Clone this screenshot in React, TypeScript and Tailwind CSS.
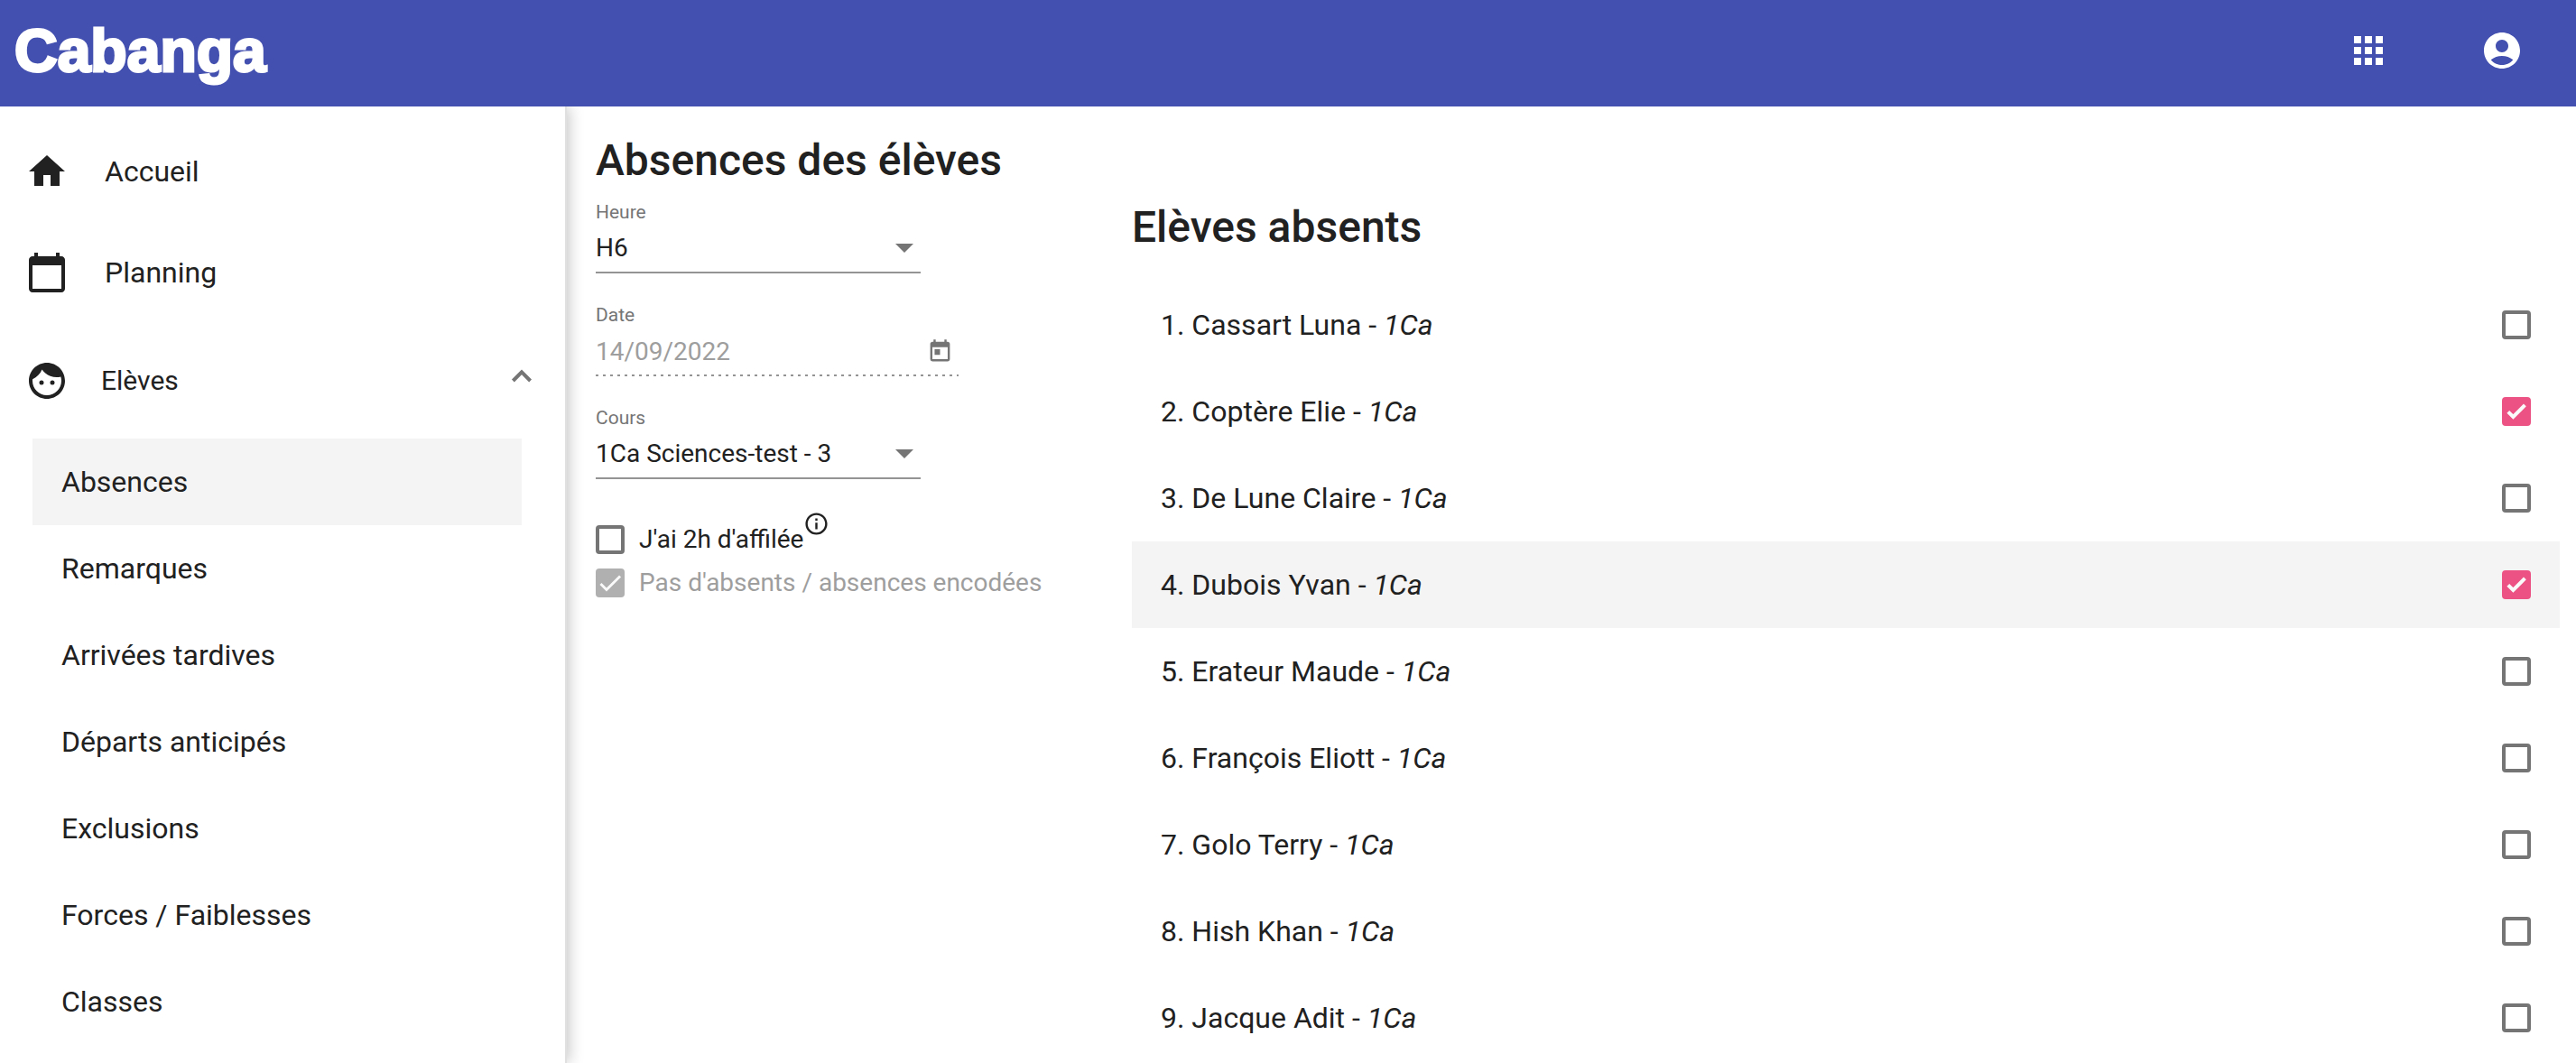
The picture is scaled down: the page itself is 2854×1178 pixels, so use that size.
import { useState } from 'react';
import {
  MdAccountCircle,
  MdApps,
  MdCalendarToday,
  MdFace,
  MdHome,
  MdInfoOutline,
  MdToday,
} from 'react-icons/md';

const studentLinks = [
  'Absences',
  'Remarques',
  'Arrivées tardives',
  'Départs anticipés',
  'Exclusions',
  'Forces / Faiblesses',
  'Classes',
];

const students = [
  { id: 1, name: 'Cassart Luna', group: '1Ca' },
  { id: 2, name: 'Coptère Elie', group: '1Ca' },
  { id: 3, name: 'De Lune Claire', group: '1Ca' },
  { id: 4, name: 'Dubois Yvan', group: '1Ca' },
  { id: 5, name: 'Erateur Maude', group: '1Ca' },
  { id: 6, name: 'François Eliott', group: '1Ca' },
  { id: 7, name: 'Golo Terry', group: '1Ca' },
  { id: 8, name: 'Hish Khan', group: '1Ca' },
  { id: 9, name: 'Jacque Adit', group: '1Ca' },
];

function Header() {
  return (
    <header className="relative z-10 flex h-[118px] items-center justify-between bg-[#4450af] pb-[6px] pl-4 pr-[58px] text-white">
      <a
        href="#"
        className="font-['Liberation_Sans',sans-serif] text-[66px] font-bold leading-[80px] [-webkit-text-stroke:3px_white]"
      >
        Cabanga
      </a>
      <div className="flex items-center gap-[100px]">
        <button type="button" aria-label="Applications">
          <MdApps className="h-12 w-12" />
        </button>
        <button type="button" aria-label="Compte">
          <MdAccountCircle className="h-12 w-12" />
        </button>
      </div>
    </header>
  );
}

function Sidebar() {
  const [open, setOpen] = useState(true);

  return (
    <nav className="w-[628px] shrink-0 border-r-2 border-[#e0e0e0] pt-4 shadow-[2px_0_16px_rgba(0,0,0,0.24)]">
      <a href="#" className="flex h-28 items-center gap-10 pl-7">
        <MdHome className="h-12 w-12" />
        Accueil
      </a>
      <a href="#" className="flex h-28 items-center gap-10 pl-7">
        <MdCalendarToday className="h-12 w-12" />
        Planning
      </a>
      <button
        type="button"
        aria-expanded={open}
        onClick={() => setOpen(!open)}
        className="flex h-32 w-full items-center gap-9 pl-7 pr-9 text-[30px]"
      >
        <MdFace className="h-12 w-12" />
        Elèves
        <svg
          viewBox="0 0 24 24"
          className={open ? 'mb-3 ml-auto h-6 w-6' : 'mb-3 ml-auto h-6 w-6 rotate-180'}
          fill="none"
          stroke="#757575"
          strokeWidth="4"
        >
          <path d="M2.4 18 12 8.4 21.6 18" />
        </svg>
      </button>
      {open && (
        <ul className="ml-9 mr-12">
          {studentLinks.map((link, i) => (
            <li key={link}>
              <a
                href="#"
                className={
                  i === 0
                    ? 'flex h-24 items-center bg-[#f4f4f4] pl-8'
                    : 'flex h-24 items-center pl-8'
                }
              >
                {link}
              </a>
            </li>
          ))}
        </ul>
      )}
    </nav>
  );
}

interface SelectFieldProps {
  id: string;
  label: string;
  options: string[];
}

function SelectField({ id, label, options }: SelectFieldProps) {
  return (
    <div className="w-[360px]">
      <label htmlFor={id} className="block text-[21px] leading-[22px] text-[#757575]">
        {label}
      </label>
      <div className="relative">
        <select
          id={id}
          className="block h-[57px] w-full appearance-none border-b-2 border-[#949494] bg-transparent pr-10 pt-[2px] outline-none"
        >
          {options.map((option) => (
            <option key={option}>{option}</option>
          ))}
        </select>
        <svg
          viewBox="0 0 20 10"
          className="pointer-events-none absolute right-2 top-6 h-[10px] w-5 fill-[#757575]"
        >
          <path d="M0 0h20L10 10z" />
        </svg>
      </div>
    </div>
  );
}

function AbsenceForm() {
  return (
    <form className="w-[594px] shrink-0 text-[28px]">
      <div className="flex flex-col gap-[35px]">
        <SelectField id="hour" label="Heure" options={['H6']} />
        <div className="w-[402px]">
          <label htmlFor="date" className="block text-[21px] leading-[22px] text-[#757575]">
            Date
          </label>
          <div className="flex h-[57px] items-center bg-[linear-gradient(to_right,#949494_33%,transparent_0)] bg-[length:8px_2px] bg-bottom-left bg-repeat-x pr-[6px] pt-[2px]">
            <input
              id="date"
              type="text"
              defaultValue="14/09/2022"
              disabled
              className="min-w-0 flex-1 text-[#9e9e9e]"
            />
            <button type="button" aria-label="Ouvrir le calendrier" className="text-[#757575]">
              <MdToday className="h-[29px] w-[29px]" />
            </button>
          </div>
        </div>
        <SelectField id="course" label="Cours" options={['1Ca Sciences-test - 3']} />
      </div>

      <div className="mt-[43px]">
        <div className="flex h-12 items-center">
          <input
            id="two-hours"
            type="checkbox"
            className="mr-4 h-8 w-8 appearance-none rounded border-4 border-[#757575] checked:bg-[#757575]"
          />
          <label htmlFor="two-hours">J'ai 2h d'affilée</label>
          <MdInfoOutline className="-mt-2 h-[29px] w-[29px] self-start" />
        </div>
        <div className="flex h-12 items-center">
          <span className="relative mr-4 h-8 w-8">
            <input
              id="encoded"
              type="checkbox"
              defaultChecked
              disabled
              className="block h-8 w-8 appearance-none rounded bg-[#b0b0b0]"
            />
            <svg
              viewBox="0 0 24 24"
              className="pointer-events-none absolute inset-0 h-8 w-8"
              fill="none"
              stroke="#fafafa"
              strokeWidth="2.13"
            >
              <path d="M4.1 12.7 9 17.6 20.3 6.3" />
            </svg>
          </span>
          <label htmlFor="encoded" className="text-[#9e9e9e]">
            Pas d'absents / absences encodées
          </label>
        </div>
      </div>
    </form>
  );
}

function StudentList() {
  const [absent, setAbsent] = useState([2, 4]);

  const toggle = (id: number) => {
    setAbsent(absent.includes(id) ? absent.filter((a) => a !== id) : [...absent, id]);
  };

  return (
    <section className="min-w-0 flex-1">
      <h2 className="mb-8 text-[48px] font-medium leading-[56px]">Elèves absents</h2>
      <ul>
        {students.map((student) => (
          <li key={student.id}>
            <label
              className={
                student.id === 4
                  ? 'flex h-24 items-center justify-between bg-[#f4f4f4] px-8'
                  : 'flex h-24 items-center justify-between px-8'
              }
            >
              <span>
                {student.id}. {student.name} - <em>{student.group}</em>
              </span>
              <span className="relative h-8 w-8">
                <input
                  type="checkbox"
                  checked={absent.includes(student.id)}
                  onChange={() => toggle(student.id)}
                  className="block h-8 w-8 appearance-none rounded border-4 border-[#757575] checked:border-[#ec5283] checked:bg-[#ec5283]"
                />
                {absent.includes(student.id) && (
                  <svg
                    viewBox="0 0 32 32"
                    className="pointer-events-none absolute inset-0 h-8 w-8"
                    fill="none"
                    stroke="#fafafa"
                    strokeWidth="4"
                  >
                    <path d="M6.8 16.3 12.4 21.9 25.4 8.9" />
                  </svg>
                )}
              </span>
            </label>
          </li>
        ))}
      </ul>
    </section>
  );
}

export default function App() {
  return (
    <div className="flex min-h-screen flex-col bg-white font-[Roboto,sans-serif] text-[32px] leading-10 text-[#212121]">
      <Header />
      <div className="flex flex-1">
        <Sidebar />
        <main className="min-w-0 flex-1 pl-8 pr-[18px] pt-8">
          <h1 className="mb-[18px] text-[48px] font-medium leading-[56px]">Absences des élèves</h1>
          <div className="flex">
            <AbsenceForm />
            <StudentList />
          </div>
        </main>
      </div>
    </div>
  );
}
